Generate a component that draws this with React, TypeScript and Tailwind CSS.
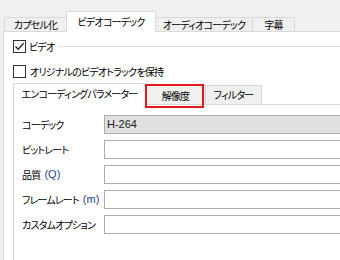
import React from 'react'

const font = "font-['Noto_Sans_CJK_JP','Noto_Sans',sans-serif] [font-feature-settings:'palt'] tracking-[-0.8px] whitespace-nowrap"

function CheckBox({ checked }: { checked?: boolean }) {
  return (
    <div className="flex h-[13px] w-[13px] shrink-0 items-center justify-center border border-[#333333] bg-white">
      {checked && (
        <svg width="11" height="11" viewBox="0 0 11 11">
          <path d="M1.5 5.5 L4.2 8.3 L9.6 2.2" fill="none" stroke="#222" strokeWidth="1.3" />
        </svg>
      )}
    </div>
  )
}

function Field({ label, note, value, disabled }: { label: string; note?: string; value?: string; disabled?: boolean }) {
  return (
    <div className="flex h-[19px] items-center">
      <div className="flex w-[82px] shrink-0 items-center text-[10px] leading-none text-black">
        {label}
        {note && (
          <span className="ml-[4px] font-['Liberation_Sans',sans-serif] text-[11px] tracking-normal text-[#1f3f8f]">{note}</span>
        )}
      </div>
      <div
        className={
          "flex h-[19px] flex-1 items-center border border-r-0 border-[#adadad] pl-[2px] font-['Liberation_Sans',sans-serif] text-[11px] leading-none tracking-normal " +
          (disabled ? 'bg-[#e0e0e0] text-[#222]' : 'bg-white')
        }
      >
        {value}
      </div>
    </div>
  )
}

export default function App() {
  const topTabs = [
    { label: 'カプセル化', w: 'w-[63px]' },
    { label: 'ビデオコーデック', w: 'w-[90px]', active: true },
    { label: 'オーディオコーデック', w: 'w-[98px]' },
    { label: '字幕', w: 'w-[43px]' },
  ]

  return (
    <div className={'flex h-[260px] w-[340px] flex-col overflow-hidden bg-[#f0f0f0] text-black ' + font}>
      {/* 上部タブ */}
      <div className="flex h-[31px] shrink-0 items-end pl-[4px]">
        {topTabs.map((t) =>
          t.active ? (
            <div
              key={t.label}
              className={`relative z-10 -mb-px -ml-px flex h-[21px] items-start justify-center border border-b-0 border-[#d9d9d9] bg-white pt-[5px] text-[10px] leading-none ${t.w}`}
            >
              {t.label}
            </div>
          ) : (
            <div
              key={t.label}
              className={`-ml-px flex h-[14px] items-center justify-center border border-b-0 border-[#d9d9d9] bg-[#f0f0f0] text-[10px] leading-none first:ml-0 ${t.w}`}
            >
              {t.label}
            </div>
          )
        )}
      </div>

      {/* タブパネル */}
      <div className="ml-[3px] flex flex-1 flex-col border-l border-t border-[#d9d9d9] bg-white">
        <div className="mt-[8px] flex h-[13px] items-center pl-[9px]">
          <CheckBox checked />
          <span className="ml-[3px] text-[10px] leading-none">ビデオ</span>
          <div className="ml-[4px] h-px flex-1 bg-[#dcdcdc]" />
        </div>

        <div className="mt-[12px] flex h-[13px] items-center pl-[9px]">
          <CheckBox />
          <span className="ml-[4px] text-[10px] leading-none">オリジナルのビデオトラックを保持</span>
        </div>

        {/* 内側タブ */}
        <div className="mt-[5px] flex h-[21px] items-end pl-[9px]">
          <div className="relative z-10 -mb-px flex h-[22px] w-[133px] items-start justify-center border border-b-0 border-[#d9d9d9] bg-white pt-[5px] text-[10px] leading-none">
            エンコーディングパラメーター
          </div>
          <div className="relative flex h-[19px] w-[60px] items-center justify-center border border-b-0 border-l-0 border-[#d9d9d9] bg-[#f0f0f0] pt-[1px] text-[10px] leading-none">
            解像度
            <div className="absolute left-[-1px] top-[-2px] z-20 h-[24px] w-[59px] border-2 border-[#e3171e]" />
          </div>
          <div className="flex h-[19px] w-[56px] items-center justify-center border border-b-0 border-l-0 border-[#d9d9d9] bg-[#f0f0f0] text-[10px] leading-none">
            フィルター
          </div>
        </div>

        <div className="ml-[9px] flex flex-1 flex-col gap-[6px] border-l border-t border-[#d9d9d9] bg-white pl-[8px] pt-[10px]">
          <Field label="コーデック" value="H-264" disabled />
          <Field label="ビットレート" />
          <Field label="品質" note="(Q)" />
          <Field label="フレームレート" note="(m)" />
          <Field label="カスタムオプション" />
        </div>
      </div>
    </div>
  )
}
